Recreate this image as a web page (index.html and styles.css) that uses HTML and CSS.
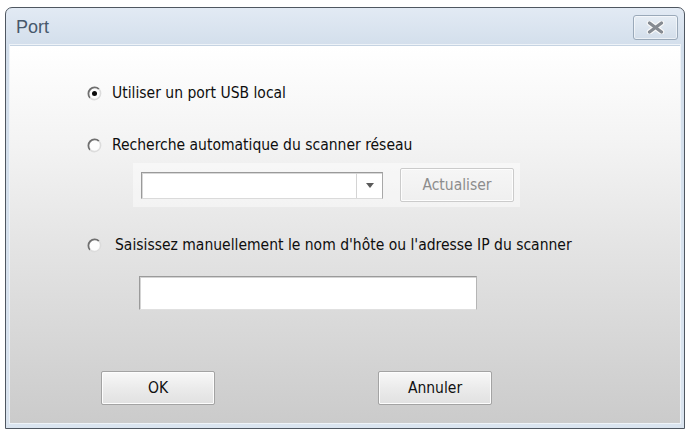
FILE: index.html
```html
<!DOCTYPE html>
<html lang="fr">
<head>
<meta charset="utf-8">
<title>Port</title>
<link rel="stylesheet" href="styles.css">
</head>
<body>
<div class="window">
  <div class="titlebar">
    <span class="title">Port</span>
    <button class="close" aria-label="Fermer">
      <svg width="19" height="13" viewBox="0 0 19 13">
        <path d="M3.5 2 L15.5 11 M15.5 2 L3.5 11" stroke="#fafafa" stroke-width="5.4" stroke-linecap="round"/>
        <path d="M3.5 2 L15.5 11 M15.5 2 L3.5 11" stroke="#868b92" stroke-width="3.2" stroke-linecap="round"/>
      </svg>
    </button>
  </div>
  <div class="frame">
    <div class="client">
      <label class="option first">
        <svg class="radio" width="15" height="15" viewBox="0 0 15 15">
          <circle cx="7.5" cy="7.5" r="6.3" fill="#fdfdfd"/>
          <path d="M3.05 11.95 A6.3 6.3 0 0 1 11.95 3.05" fill="none" stroke="#6f6f6f" stroke-width="1.8"/>
          <path d="M11.95 3.05 A6.3 6.3 0 0 1 3.05 11.95" fill="none" stroke="#dcdcdc" stroke-width="1.6"/>
          <circle cx="7.5" cy="7.5" r="2.5" fill="#0c0c0c"/>
        </svg>
        <span class="label">Utiliser un port USB local</span>
      </label>
      <label class="option second">
        <svg class="radio" width="15" height="15" viewBox="0 0 15 15">
          <circle cx="7.5" cy="7.5" r="6.3" fill="#fdfdfd"/>
          <path d="M3.05 11.95 A6.3 6.3 0 0 1 11.95 3.05" fill="none" stroke="#6f6f6f" stroke-width="1.8"/>
          <path d="M11.95 3.05 A6.3 6.3 0 0 1 3.05 11.95" fill="none" stroke="#dcdcdc" stroke-width="1.6"/>
        </svg>
        <span class="label">Recherche automatique du scanner réseau</span>
      </label>
      <div class="panel">
        <div class="combo">
          <div class="combo-text"></div>
          <div class="combo-btn"><span class="arrow"></span></div>
        </div>
        <button class="btn disabled">Actualiser</button>
      </div>
      <label class="option third">
        <svg class="radio" width="15" height="15" viewBox="0 0 15 15">
          <circle cx="7.5" cy="7.5" r="6.3" fill="#fdfdfd"/>
          <path d="M3.05 11.95 A6.3 6.3 0 0 1 11.95 3.05" fill="none" stroke="#6f6f6f" stroke-width="1.8"/>
          <path d="M11.95 3.05 A6.3 6.3 0 0 1 3.05 11.95" fill="none" stroke="#dcdcdc" stroke-width="1.6"/>
        </svg>
        <span class="label wide">Saisissez manuellement le nom d'hôte ou l'adresse IP du scanner</span>
      </label>
      <div class="textbox"></div>
      <div class="actions">
        <button class="btn ok">OK</button>
        <button class="btn cancel">Annuler</button>
      </div>
    </div>
  </div>
</div>
</body>
</html>
```
FILE: styles.css
```css
html, body {
  margin: 0;
  padding: 0;
  background: #ffffff;
}
body {
  width: 687px;
  height: 431px;
  overflow: hidden;
  font-family: "DejaVu Sans Condensed", "DejaVu Sans", "Liberation Sans", sans-serif;
  font-stretch: semi-condensed;
}
.window {
  margin: 7px 0 0 5px;
  width: 678px;
  height: 420px;
  border: 1px solid #4f5761;
  border-radius: 7px 7px 0 0;
  background: linear-gradient(#e2eaf4, #d2deeb 40px, #dae4ef);
  display: flex;
  flex-direction: column;
  overflow: hidden;
}
.titlebar {
  height: 37px;
  flex: none;
  display: flex;
  justify-content: space-between;
  align-items: flex-start;
  padding: 0 6px 0 10px;
}
.title {
  font-family: "Liberation Sans", "Noto Sans", sans-serif;
  font-size: 18px;
  color: #47586b;
  line-height: 39px;
}
.close {
  margin-top: 7px;
  width: 45px;
  height: 25px;
  border: 1px solid #9aa9b9;
  border-radius: 3px;
  background: linear-gradient(#e6edf5, #d3deea);
  box-shadow: inset 0 0 0 1px rgba(255,255,255,0.55);
  padding: 0;
  display: flex;
  align-items: center;
  justify-content: center;
}
.frame {
  flex: 1;
  padding: 0 4px 5px 4px;
  display: flex;
}
.client {
  flex: 1;
  background: linear-gradient(#ffffff, #f3f3f3 100px, #e4e4e4 200px, #cbcbcb);
  border-top: 1px solid #c5d3e2;
  box-shadow: 0 0 0 1px #eef3f8;
  display: flex;
  flex-direction: column;
  align-items: flex-start;
  padding-left: 77px;
}
.option {
  display: flex;
  align-items: center;
  height: 20px;
  font-size: 15.5px;
  color: #0e0e0e;
}
.option.first { margin-top: 37px; }
.option.second { margin-top: 32px; }
.option.third { margin-top: 28px; }
.radio {
  flex: none;
  margin-right: 10px;
}
.label.wide { margin-left: 3px; }
.panel {
  margin-top: 8px;
  margin-left: 46px;
  width: 387px;
  height: 44px;
  background: rgba(255,255,255,0.45);
  display: flex;
  align-items: center;
  padding-left: 8px;
  box-sizing: border-box;
}
.combo {
  width: 242px;
  height: 27px;
  box-sizing: border-box;
  border: 1px solid;
  border-color: #9a9a9a #a8a8a8 #dadada #9a9a9a;
  box-shadow: inset 1px 1px 0 #d8d8d8;
  background: #ffffff;
  display: flex;
}
.combo-text { flex: 1; }
.combo-btn {
  width: 25px;
  border-left: 1px solid #d4d4d4;
  display: flex;
  align-items: center;
  justify-content: center;
}
.arrow {
  width: 0;
  height: 0;
  border-left: 4px solid transparent;
  border-right: 4px solid transparent;
  border-top: 5px solid #5a5a5a;
  margin-top: 1px;
}
.btn {
  font-family: inherit;
  font-stretch: semi-condensed;
  font-size: 15.5px;
  width: 114px;
  height: 34px;
  border: 1px solid #a3a3a3;
  border-radius: 2px;
  background: linear-gradient(#f8f8f8, #ebebeb 50%, #e1e1e1);
  box-shadow: inset 0 0 0 1px #fdfdfd;
  color: #111;
  padding: 0;
}
.btn.disabled {
  margin-left: 17px;
  color: #8c8c8c;
  border-color: #cbcbcb;
  background: linear-gradient(#f6f6f6, #efefef);
}
.textbox {
  margin-top: 21px;
  margin-left: 52px;
  width: 338px;
  height: 34px;
  box-sizing: border-box;
  border: 1px solid;
  border-color: #9a9a9a #b5b5b5 #e0e0e0 #9a9a9a;
  box-shadow: inset 1px 1px 0 #d4d4d4;
  background: #ffffff;
}
.actions {
  margin-top: 61px;
  margin-left: 14px;
  display: flex;
  gap: 163px;
}
```
